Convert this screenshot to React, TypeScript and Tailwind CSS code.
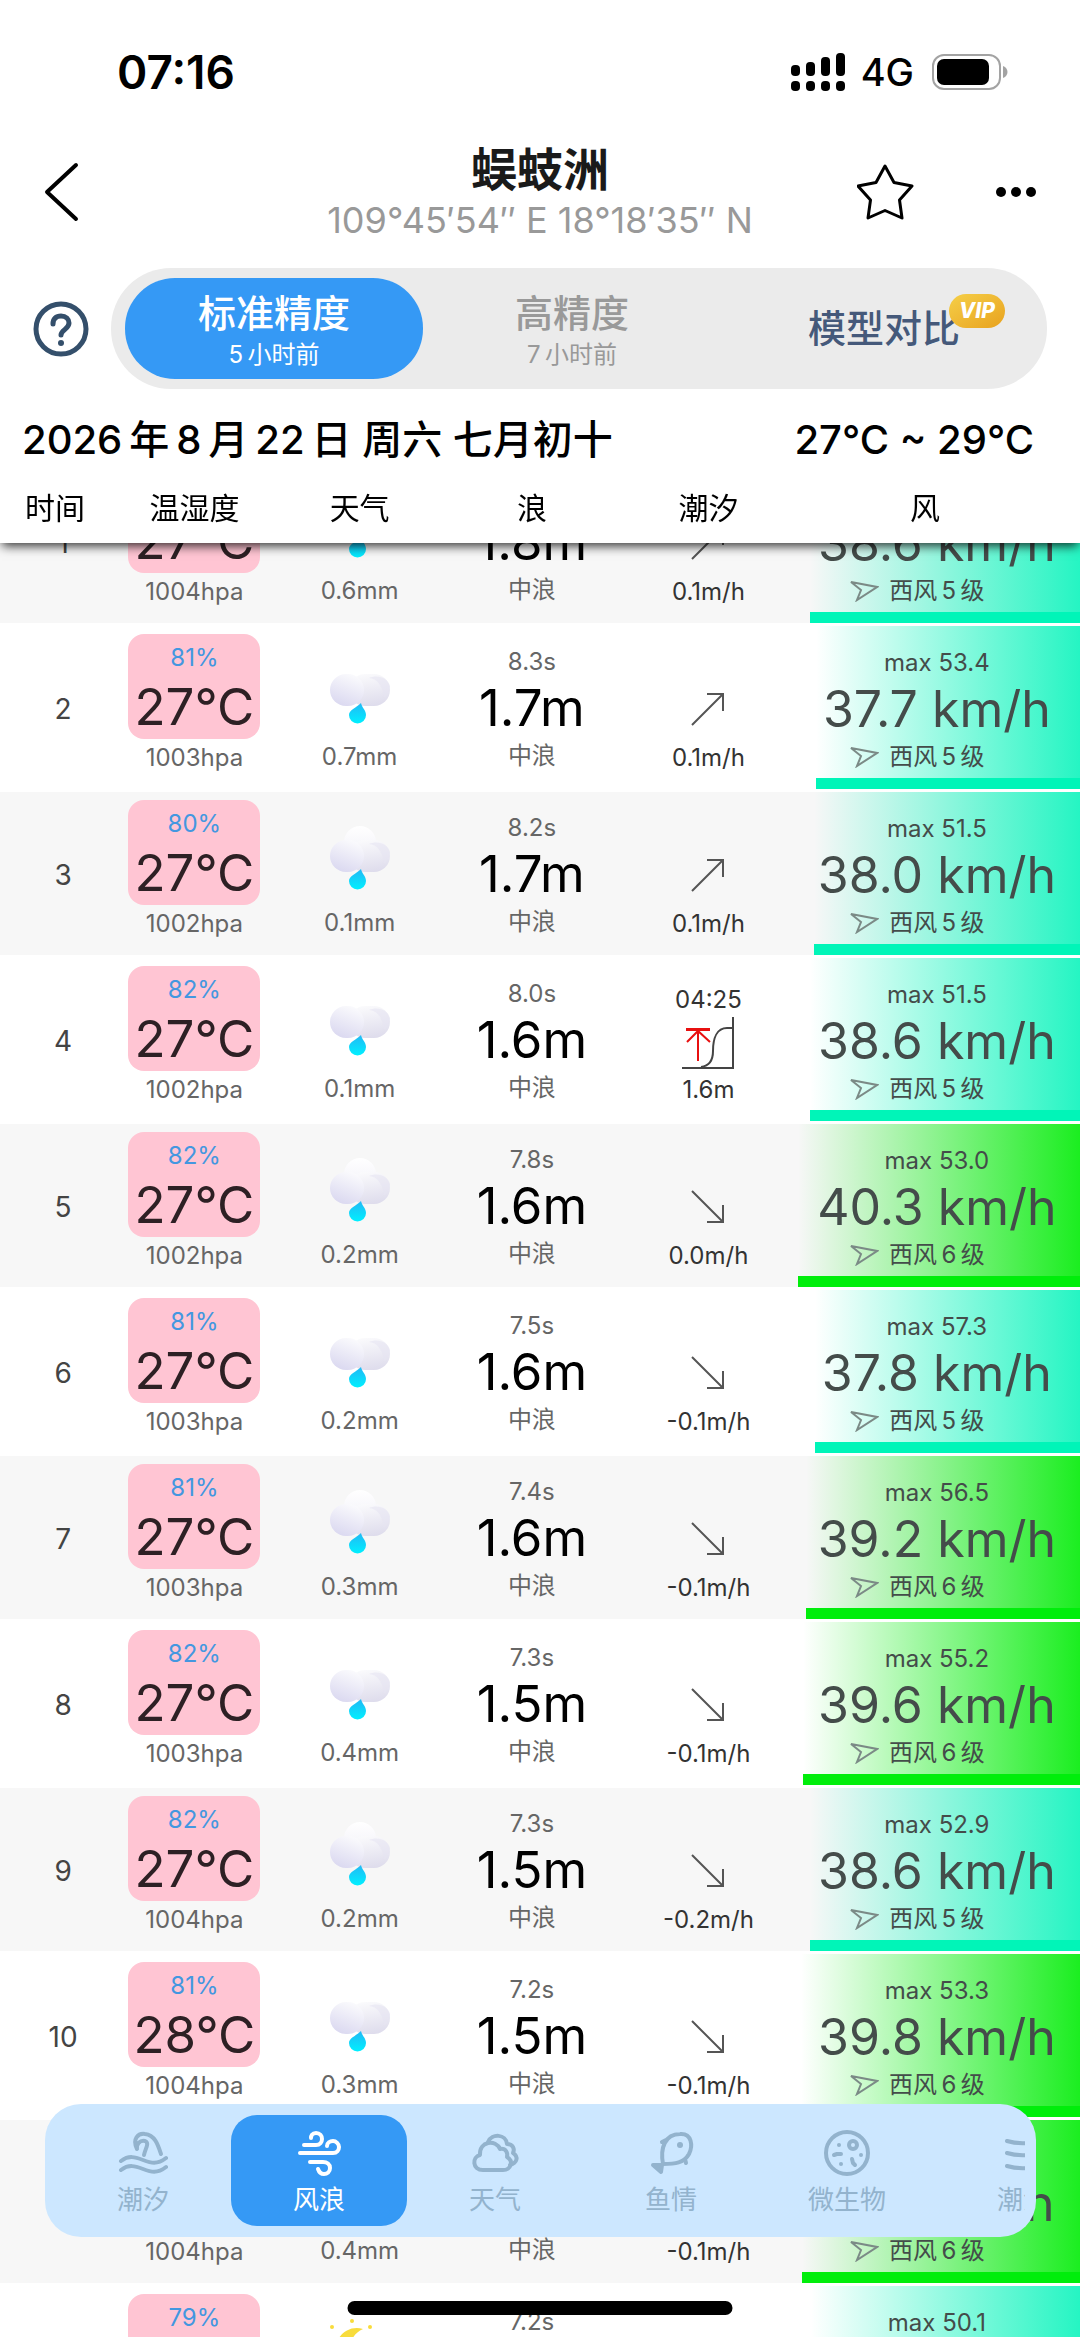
import { ReactNode, useLayoutEffect, useRef, useState } from "react";

type Sky = "low" | "tall" | "night";

type Hour = {
  hour: number;
  humidity: number;
  temp: number;
  pressure: number;
  sky: Sky;
  rain: string;
  period: string;
  wave: string;
  tide: "up" | "down" | "high";
  tideValue: string;
  tideTime?: string;
  gust: string;
  wind: number;
  level: 5 | 6;
};

const hours: Hour[] = [
  { hour: 1, humidity: 81, temp: 27, pressure: 1004, sky: "low", rain: "0.6", period: "8.3", wave: "1.8", tide: "up", tideValue: "0.1m/h", gust: "53.9", wind: 38.6, level: 5 },
  { hour: 2, humidity: 81, temp: 27, pressure: 1003, sky: "low", rain: "0.7", period: "8.3", wave: "1.7", tide: "up", tideValue: "0.1m/h", gust: "53.4", wind: 37.7, level: 5 },
  { hour: 3, humidity: 80, temp: 27, pressure: 1002, sky: "tall", rain: "0.1", period: "8.2", wave: "1.7", tide: "up", tideValue: "0.1m/h", gust: "51.5", wind: 38, level: 5 },
  { hour: 4, humidity: 82, temp: 27, pressure: 1002, sky: "low", rain: "0.1", period: "8.0", wave: "1.6", tide: "high", tideValue: "1.6m", tideTime: "04:25", gust: "51.5", wind: 38.6, level: 5 },
  { hour: 5, humidity: 82, temp: 27, pressure: 1002, sky: "tall", rain: "0.2", period: "7.8", wave: "1.6", tide: "down", tideValue: "0.0m/h", gust: "53.0", wind: 40.3, level: 6 },
  { hour: 6, humidity: 81, temp: 27, pressure: 1003, sky: "low", rain: "0.2", period: "7.5", wave: "1.6", tide: "down", tideValue: "-0.1m/h", gust: "57.3", wind: 37.8, level: 5 },
  { hour: 7, humidity: 81, temp: 27, pressure: 1003, sky: "tall", rain: "0.3", period: "7.4", wave: "1.6", tide: "down", tideValue: "-0.1m/h", gust: "56.5", wind: 39.2, level: 6 },
  { hour: 8, humidity: 82, temp: 27, pressure: 1003, sky: "low", rain: "0.4", period: "7.3", wave: "1.5", tide: "down", tideValue: "-0.1m/h", gust: "55.2", wind: 39.6, level: 6 },
  { hour: 9, humidity: 82, temp: 27, pressure: 1004, sky: "tall", rain: "0.2", period: "7.3", wave: "1.5", tide: "down", tideValue: "-0.2m/h", gust: "52.9", wind: 38.6, level: 5 },
  { hour: 10, humidity: 81, temp: 28, pressure: 1004, sky: "low", rain: "0.3", period: "7.2", wave: "1.5", tide: "down", tideValue: "-0.1m/h", gust: "53.3", wind: 39.8, level: 6 },
  { hour: 11, humidity: 80, temp: 28, pressure: 1004, sky: "tall", rain: "0.4", period: "7.2", wave: "1.5", tide: "down", tideValue: "-0.1m/h", gust: "52.6", wind: 39.7, level: 6 },
  { hour: 12, humidity: 79, temp: 28, pressure: 1004, sky: "night", rain: "0.2", period: "7.2", wave: "1.5", tide: "down", tideValue: "-0.1m/h", gust: "50.1", wind: 38.4, level: 5 },
];

function StatusBar() {
  return (
    <div className="flex h-[144px] items-center justify-between pr-[72px] pl-[117px]">
      <span className="text-[46px] font-semibold">07:16</span>
      <div className="flex items-center">
        <svg width="54" height="38" viewBox="0 0 54 38">
          <rect x="0" y="12" width="9" height="11" rx="4" />
          <rect x="15" y="9" width="9" height="14" rx="4" />
          <rect x="30" y="4" width="9" height="19" rx="4" />
          <rect x="45" y="0" width="9" height="23" rx="4" />
          <rect x="0" y="28" width="9" height="10" rx="4" />
          <rect x="15" y="28" width="9" height="10" rx="4" />
          <rect x="30" y="28" width="9" height="10" rx="4" />
          <rect x="45" y="28" width="9" height="10" rx="4" />
        </svg>
        <span className="ml-4 text-[38px] font-medium">4G</span>
        <svg className="ml-[18px]" width="76" height="36" viewBox="0 0 76 36">
          <rect x="1" y="1" width="67" height="34" rx="11" fill="none" stroke="#a3a3a3" strokeWidth="2" />
          <rect x="5" y="5" width="52" height="26" rx="7" />
          <path d="M71 12c6 2 6 10 0 12z" fill="#a3a3a3" />
        </svg>
      </div>
    </div>
  );
}

function TitleBar() {
  return (
    <div className="flex h-24 items-center justify-between px-[43px]">
      <button aria-label="返回" className="w-[180px]">
        <svg width="36" height="60" viewBox="0 0 36 60" fill="none" stroke="#000" strokeWidth="4" strokeLinecap="round" strokeLinejoin="round">
          <path d="M33 3 4 30l29 27" />
        </svg>
      </button>
      <div className="flex flex-col items-center pt-1">
        <h1 className="text-[46px] leading-[52px] font-bold text-[#1a1a1a]">蜈蚑洲</h1>
        <p className="text-4xl leading-[50px] text-[#999]">109°45′54″ E 18°18′35″ N</p>
      </div>
      <div className="flex w-[180px] items-center justify-between">
        <button aria-label="收藏">
          <svg width="58" height="58" viewBox="0 0 58 58" fill="none" stroke="#000" strokeWidth="3" strokeLinejoin="round">
            <path d="M28 3 37 19.500 55 23 42.500 37 45 55 28 47.500 11 55 13.500 37 1 23 19 19.500Z" />
          </svg>
        </button>
        <button aria-label="更多">
          <svg width="42" height="12" viewBox="0 0 42 12">
            <circle cx="6" cy="6" r="5" />
            <circle cx="21" cy="6" r="5" />
            <circle cx="36" cy="6" r="5" />
          </svg>
        </button>
      </div>
    </div>
  );
}

function ModelSwitch() {
  return (
    <div className="mt-7 flex items-center gap-[22px] px-[33px]">
      <button aria-label="帮助" className="shrink-0">
        <svg width="56" height="56" viewBox="0 0 56 56" fill="none" stroke="#344f6b" strokeWidth="5" strokeLinecap="round">
          <circle cx="28" cy="28" r="25" />
          <path d="M20 23c0-5 3-8 8-8s8 3 8 7c0 6-8 7-8 12" />
          <circle cx="28" cy="42" r="3" fill="#344f6b" stroke="none" />
        </svg>
      </button>
      <div className="grid h-[121px] flex-1 grid-cols-[298fr_298fr_326fr] rounded-[60px] bg-[#ebebeb] py-[10px] pl-[14px]">
        <button className="flex flex-col items-center justify-center rounded-[50px] bg-[#3599f5] pt-1 text-white">
          <span className="text-[38px] leading-[48px] font-medium">标准精度</span>
          <span className="text-2xl leading-9">5{"\u2009"}小时前</span>
        </button>
        <button className="flex flex-col items-center justify-center pt-1 text-[#999]">
          <span className="text-[38px] leading-[48px] font-medium">高精度</span>
          <span className="text-2xl leading-9">7{"\u2009"}小时前</span>
        </button>
        <button className="flex items-center justify-center text-[#45597a]">
          <span className="relative text-[38px] font-medium">
            模型对比
            <span className="absolute -top-1.5 left-[141px] flex h-[34px] w-14 items-center justify-center rounded-[17px] bg-linear-to-br from-[#f5cf47] to-[#e8a21c] text-[21px] font-extrabold text-white italic">
              VIP
            </span>
          </span>
        </button>
      </div>
    </div>
  );
}

function SkyIcon({ sky }: { sky: Sky }) {
  if (sky === "night") {
    return (
      <svg className="mx-auto" width="66" height="66" viewBox="0 0 66 66" fill="#f8dc3c">
        <path d="M36 10c-14-4-27 6-27 20s12 24 26 21c-16-8-17-33 1-41Z" />
        <circle cx="25" cy="2" r="2" />
        <circle cx="5" cy="8" r="2" />
        <circle cx="43" cy="8" r="2" />
      </svg>
    );
  }
  return (
    <svg className="mx-auto" width="66" height="66" viewBox="0 0 66 66">
      <defs>
        <linearGradient id="cloudTop" x1="0.5" y1="0" x2="0.5" y2="1">
          <stop offset="0" stopColor="#ffffff" />
          <stop offset="1" stopColor="#f1f0f8" />
        </linearGradient>
        <linearGradient id="cloudLeft" x1="0.7" y1="0" x2="0.3" y2="1">
          <stop offset="0" stopColor="#fbfbfd" />
          <stop offset="1" stopColor="#dad8f0" />
        </linearGradient>
        <linearGradient id="cloudRight" x1="0.4" y1="0" x2="0.6" y2="1">
          <stop offset="0" stopColor="#fafafc" />
          <stop offset="1" stopColor="#dedcec" />
        </linearGradient>
        <linearGradient id="drop" x1="0.5" y1="0" x2="0.5" y2="1">
          <stop offset="0" stopColor="#22b8f5" />
          <stop offset="1" stopColor="#00f0ff" />
        </linearGradient>
      </defs>
      {sky === "tall" && <circle cx="33" cy="17" r="16" fill="url(#cloudTop)" />}
      <rect x="22" y="15" width="41" height="32" rx="16" fill="url(#cloudRight)" />
      <path d="M42 19c8 1 13 6 15 20 5-4 6-9 6-12-2-8-12-12-21-8Z" fill="#e6e4f1" opacity="0.6" />
      <rect x="3" y="15" width="34" height="32" rx="16" fill="url(#cloudLeft)" />
      <path d="M34 44c1 5 5 7 5 12a8 8 0 0 1-17 0c0-5 7-7 12-12Z" fill="url(#drop)" />
    </svg>
  );
}

function TideIcon({ tide }: { tide: Hour["tide"] }) {
  if (tide === "high") {
    return (
      <svg className="mx-auto" width="54" height="54" viewBox="0 0 54 54" fill="none">
        <path d="M1 52h51V1" stroke="#444" strokeWidth="2" />
        <path d="M20 51c8-1 12-6 12-16 0-13 4-23 14-23h5" stroke="#444" strokeWidth="2" />
        <path d="M5 13.500h24" stroke="#e81010" strokeWidth="3" />
        <path d="M17 45V15M6 26l11-11 12 11" stroke="#e81010" strokeWidth="2" />
      </svg>
    );
  }
  return (
    <svg className="mx-auto" width="34" height="34" viewBox="0 0 34 34" fill="none" stroke="#555" strokeWidth="2">
      {tide === "up" ? <path d="M1 33 32 2M16 2h16v17" /> : <path d="M1 1l31 31M16 32h16V15" />}
    </svg>
  );
}

function HourRow({ data }: { data: Hour }) {
  const strong = data.level === 6;

  return (
    <tr className="odd:bg-[#f7f7f7] [&>td]:h-[166px] [&>td]:border-b-[3px] [&>td]:border-white [&>td]:p-0 [&>td]:align-top">
      <td>
        <p className="pt-[63px] pl-4 text-[28px] leading-10 text-[#444]">{data.hour}</p>
      </td>
      <td>
        <div className="mx-auto mt-2 h-[105px] w-[132px] rounded-2xl bg-[#ffc5d3] pt-2">
          <p className="text-2xl leading-8 text-[#4397e0]">{data.humidity}%</p>
          <p className="text-[51px] leading-[66px] text-[#2d2024]">{data.temp}°C</p>
        </div>
        <p className="mt-[3px] text-2xl leading-8 text-[#666]">{data.pressure}hpa</p>
      </td>
      <td>
        <div className="pt-[33px]">
          <SkyIcon sky={data.sky} />
        </div>
        <p className="mt-4 text-2xl leading-8 text-[#666]">{data.rain}mm</p>
      </td>
      <td>
        <p className="pt-5 text-2xl leading-8 text-[#666]">{data.period}s</p>
        <p className="text-[51px] leading-[60px] text-black">{data.wave}m</p>
        <p className="text-2xl leading-9 text-[#666]">中浪</p>
      </td>
      <td className="text-2xl leading-8 text-[#333]">
        {data.tideTime ? (
          <p className="pt-[26px]">{data.tideTime}</p>
        ) : (
          <div className="h-[66px]" />
        )}
        <TideIcon tide={data.tide} />
        <p className={data.tideTime ? "mt-1" : "mt-4"}>{data.tideValue}</p>
      </td>
      <td className="relative">
        <div
          className={`absolute top-0 right-0 h-[163px] border-b-[11px] bg-linear-to-r from-transparent ${
            strong ? "border-[#00ee0b] to-[#1bee20]" : "border-[#00f5b8] to-[#25f5c3]"
          }`}
          style={{ width: `${data.wind * 7}px` }}
        />
        <div className="relative text-[#444c4a]">
          <p className="pt-[21px] text-2xl leading-8">max {data.gust}</p>
          <p className="text-[50px] leading-[60px]">{data.wind.toFixed(1)} km/h</p>
          <p className="flex items-center justify-center gap-[10px] pr-10 text-2xl leading-9">
            <svg width="30" height="22" viewBox="0 0 30 22" fill="none" stroke="#7b8a86" strokeWidth="2">
              <path d="M2 2 28 7 8 20l4-10Z" />
            </svg>
            西风{"\u2009"}{data.level}{"\u2009"}级
          </p>
        </div>
      </td>
    </tr>
  );
}

const tabs: { label: string; icon: ReactNode }[] = [
  {
    label: "潮汐",
    icon: (
      <>
        <path d="M19 21C14 11 20 5 27 6c10 1 13 11 16 20M19 21c-1-5 3-9 8-8 5 2 0 8-1 14" />
        <path d="M3 33c8-6 14-4 22-1s14 5 23-2M3 42c8-6 14-4 22-1s14 5 23-2" />
      </>
    ),
  },
  {
    label: "风浪",
    icon: (
      <>
        <path d="M10 17h12c4 0 6-3 6-6s-2-6-6-6-5 3-5 5" />
        <path d="M6 25h33c4 0 6-3 6-6s-3-6-6-6-6 2-6 5" />
        <path d="M16 34h13c4 0 7 2 7 6s-3 6-6 6-5-2-6-5" />
      </>
    ),
  },
  {
    label: "天气",
    icon: (
      <>
        <path d="M13 42C2 42 2 29 10 27c-1-14 16-16 20-6 6-1 8 4 7 8 7 4 4 13-4 13Z" />
        <path d="M18 14c4-9 18-8 19 2 6 0 8 5 6 9 6 4 4 10-3 12" />
      </>
    ),
  },
  {
    label: "鱼情",
    icon: (
      <>
        <path d="M17 36C14 20 19 6 34 6c12-1 13 12 9 20-5 9-14 10-26 10ZM20 12l-4 2M39 31l1 4" />
        <path d="M16 37l-9 0 8 7Z" fill="currentColor" />
        <circle cx="34" cy="17" r="3" fill="currentColor" stroke="none" />
      </>
    ),
  },
  {
    label: "微生物",
    icon: (
      <>
        <circle cx="25" cy="25" r="21" />
        <circle cx="31" cy="17" r="4" />
        <path d="M12 27l3-1 4 0M30 31l1 4 2 2" />
        <circle cx="17" cy="17" r="2" fill="currentColor" stroke="none" />
        <circle cx="39" cy="27" r="2" fill="currentColor" stroke="none" />
        <circle cx="19" cy="36" r="2" fill="currentColor" stroke="none" />
      </>
    ),
  },
  {
    label: "潮流",
    icon: <path d="M9 13c9 3 22 3 32 0M9 25c9 3 22 3 32 0M9 38c9 3 22 3 32 0" />,
  },
];

function TabBar() {
  const [active, setActive] = useState("风浪");

  return (
    <nav className="fixed right-[44px] bottom-[100px] left-[45px] rounded-[36px] bg-[#cce7ff] py-[11px] pr-[11px] pl-[10px]">
      <div className="flex overflow-hidden">
        {tabs.map((tab) => (
          <button
            key={tab.label}
            onClick={() => setActive(tab.label)}
            className={`flex h-[111px] w-[176px] shrink-0 flex-col items-center justify-center gap-1 rounded-[26px] pt-1 text-[26px] leading-9 ${
              active === tab.label ? "bg-[#3599f5] text-white" : "text-[#93b3cd]"
            }`}
          >
            <svg width="50" height="50" viewBox="0 0 50 50" fill="none" stroke="currentColor" strokeWidth="4" strokeLinecap="round" strokeLinejoin="round">
              {tab.icon}
            </svg>
            {tab.label}
          </button>
        ))}
      </div>
    </nav>
  );
}

export default function App() {
  const listRef = useRef<HTMLDivElement>(null);

  // open the list a bit past midnight, the first row sits half under the header
  useLayoutEffect(() => {
    if (listRef.current) listRef.current.scrollTop = 83;
  }, []);

  return (
    <div className="flex h-screen flex-col overflow-hidden bg-white font-['Inter','Noto_Sans_CJK_SC',sans-serif] text-black">
      <header>
        <StatusBar />
        <TitleBar />
        <ModelSwitch />
        <div className="flex items-center justify-between pt-6 pr-[46px] pl-[22px] text-[40px] leading-[54px] font-medium">
          <h2>
            2026{"\u2009"}年{"\u2009"}8{"\u2009"}月{"\u2009"}22{"\u2009"}日 周六 七月初十
          </h2>
          <p>27°C ~ 29°C</p>
        </div>
      </header>
      <div ref={listRef} className="min-h-0 flex-1 overflow-y-auto [scrollbar-width:none]">
        <table className="w-full table-fixed border-separate border-spacing-0 text-center">
          <thead className="sticky top-0 z-10 bg-white text-[30px] leading-10 shadow-[0_5px_10px_-2px_rgba(0,0,0,0.8)]">
            <tr className="[&>th]:h-[76px] [&>th]:p-0 [&>th]:pt-1.5 [&>th]:font-normal">
              <th className="w-[10.2%]">时间</th>
              <th className="w-[15.6%]">温湿度</th>
              <th className="w-[15%]">天气</th>
              <th className="w-[16.9%]">浪</th>
              <th className="w-[15.8%]">潮汐</th>
              <th>
                <span className="pr-6">风</span>
              </th>
            </tr>
          </thead>
          <tbody>
            {hours.map((data) => (
              <HourRow key={data.hour} data={data} />
            ))}
          </tbody>
        </table>
      </div>
      <TabBar />
      <div className="fixed bottom-[22px] left-1/2 h-[14px] w-[385px] -translate-x-1/2 rounded-full bg-black" />
    </div>
  );
}
